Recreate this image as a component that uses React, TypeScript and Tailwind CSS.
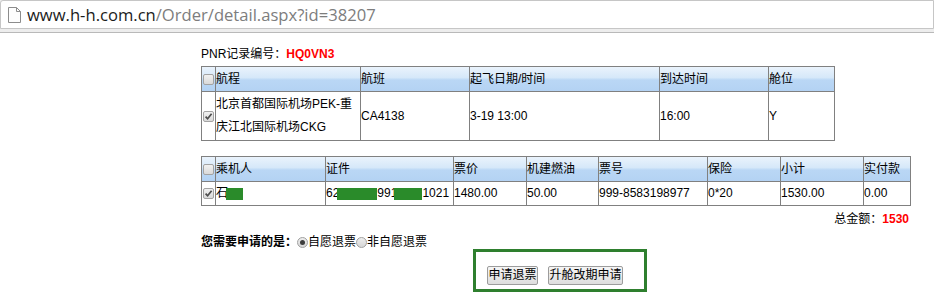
import React from "react";

const F = "font-['Liberation_Sans','Noto_Sans_CJK_SC',sans-serif]";
const HEAD_BG =
  "bg-[linear-gradient(to_bottom,#eaf3fc_0%,#d6e8f9_42%,#bad7f5_52%,#b3d2f3_100%)]";

function Check({ checked }: { checked?: boolean }) {
  return (
    <span className="relative inline-block w-[11px] h-[11px] border border-[#a3a3a3] rounded-[2px] bg-[linear-gradient(to_bottom,#f1f1f1,#d9d9d9)] align-middle">
      {checked && (
        <svg className="absolute left-0 top-0" width="9" height="9" viewBox="0 0 9 9">
          <path d="M1.6 4.6 L3.6 6.8 L7.6 1.8" fill="none" stroke="#4d4d4d" strokeWidth="1.7" />
        </svg>
      )}
    </span>
  );
}

function Radio({ checked }: { checked?: boolean }) {
  return (
    <span className="relative inline-flex items-center justify-center w-[11px] h-[11px] rounded-full border border-[#a0a0a0] bg-[linear-gradient(to_bottom,#eeeeee,#d6d6d6)]">
      {checked && <span className="block w-[5px] h-[5px] rounded-full bg-[#3c3c3c]" />}
    </span>
  );
}

function Redact({ w }: { w: number }) {
  const cls =
    w === 17
      ? "w-[17px] -ml-[2px]"
      : w === 40
      ? "w-[40px] -ml-[2px]"
      : "w-[28px] -ml-[3px]";
  return <span className={`inline-block h-[12px] bg-[#2a8b2a] align-middle ${cls}`} />;
}

const cell = "border border-[#808080] p-0 text-left font-normal align-middle";

export default function App() {
  return (
    <div className={`${F} w-[934px] h-[296px] bg-white text-black text-[12px] leading-[23px] overflow-hidden`}>
      {/* address bar */}
      <div className="h-[33px] bg-[#ededed] border-b border-[#b9b9b9]">
        <div className="h-[29px] bg-white border border-[#c6c6c6] rounded-tl-[3px] flex items-center pl-[7px] gap-[6px]">
          <svg width="13" height="16" viewBox="0 0 13 16" className="shrink-0">
            <path d="M0.5 0.5 H8.5 L12.5 4.5 V15.5 H0.5 Z" fill="#fdfdfd" stroke="#8c8c8c" />
            <path d="M8.5 0.5 V4.5 H12.5" fill="none" stroke="#8c8c8c" />
          </svg>
          <span className="font-['Open_Sans',sans-serif] text-[16.6px] leading-[20px]">
            <span className="text-[#1b1b1b]">www.h-h.com.cn</span>
            <span className="text-[#7d7d7d]">/Order/detail.aspx?id=38207</span>
          </span>
        </div>
      </div>

      <div className="ml-[201px] w-[708px]">
        <div className="mt-[13px] leading-[16px]">
          PNR记录编号：<span className="font-bold text-[#ff0000]">HQ0VN3</span>
        </div>

        <table className="mt-[4px] w-[633px] table-fixed border-collapse">
          <colgroup>
            <col className="w-[14px]" />
            <col className="w-[145px]" />
            <col className="w-[109px]" />
            <col className="w-[190px]" />
            <col className="w-[109px]" />
            <col className="w-[66px]" />
          </colgroup>
          <thead>
            <tr className={`h-[25px] ${HEAD_BG}`}>
              <th className={`${cell} pl-[1px]`}><Check /></th>
              <th className={cell}>航程</th>
              <th className={cell}>航班</th>
              <th className={cell}>起飞日期/时间</th>
              <th className={cell}>到达时间</th>
              <th className={cell}>舱位</th>
            </tr>
          </thead>
          <tbody>
            <tr className="h-[49px]">
              <td className={`${cell} pl-[1px]`}><Check checked /></td>
              <td className={cell}>北京首都国际机场PEK-重庆江北国际机场CKG</td>
              <td className={cell}>CA4138</td>
              <td className={cell}>3-19 13:00</td>
              <td className={cell}>16:00</td>
              <td className={cell}>Y</td>
            </tr>
          </tbody>
        </table>

        <table className="mt-[15px] w-[709px] table-fixed border-collapse">
          <colgroup>
            <col className="w-[14px]" />
            <col className="w-[110px]" />
            <col className="w-[128px]" />
            <col className="w-[73px]" />
            <col className="w-[72px]" />
            <col className="w-[109px]" />
            <col className="w-[73px]" />
            <col className="w-[83px]" />
            <col className="w-[47px]" />
          </colgroup>
          <thead>
            <tr className={`h-[25px] ${HEAD_BG}`}>
              <th className={`${cell} pl-[1px]`}><Check /></th>
              <th className={cell}>乘机人</th>
              <th className={cell}>证件</th>
              <th className={cell}>票价</th>
              <th className={cell}>机建燃油</th>
              <th className={cell}>票号</th>
              <th className={cell}>保险</th>
              <th className={cell}>小计</th>
              <th className={cell}>实付款</th>
            </tr>
          </thead>
          <tbody>
            <tr className="h-[24px]">
              <td className={`${cell} pl-[1px]`}><Check checked /></td>
              <td className={`${cell} whitespace-nowrap`}>石<Redact w={17} /></td>
              <td className={`${cell} whitespace-nowrap overflow-hidden`}>62<Redact w={40} />991<Redact w={28} />1021</td>
              <td className={cell}>1480.00</td>
              <td className={cell}>50.00</td>
              <td className={cell}>999-8583198977</td>
              <td className={cell}>0*20</td>
              <td className={cell}>1530.00</td>
              <td className={cell}>0.00</td>
            </tr>
          </tbody>
        </table>

        <div className="mt-[5px] leading-[16px] text-right">
          总金额：<span className="font-bold text-[#ff0000]">1530</span>
        </div>

        <div className="mt-[9px] h-[13px] flex items-center leading-[13px]">
          <span className="font-bold">您需要申请的是：</span>
          <Radio checked />
          <span>自愿退票</span>
          <Radio />
          <span>非自愿退票</span>
        </div>

        <div className="ml-[272px] w-[174px] h-[43px] border-[3px] border-[#2e7f2e] pl-[11px] pt-[14px] flex gap-[10px] items-start">
          <button className="h-[19px] w-[51px] px-0 border border-[#9c9c9c] rounded-[2px] bg-[linear-gradient(to_bottom,#f6f6f6,#dddddd)] text-[12px] leading-[17px] text-black">
            申请退票
          </button>
          <button className="h-[19px] w-[75px] px-0 border border-[#9c9c9c] rounded-[2px] bg-[linear-gradient(to_bottom,#f6f6f6,#dddddd)] text-[12px] leading-[17px] text-black">
            升舱改期申请
          </button>
        </div>
      </div>
    </div>
  );
}
